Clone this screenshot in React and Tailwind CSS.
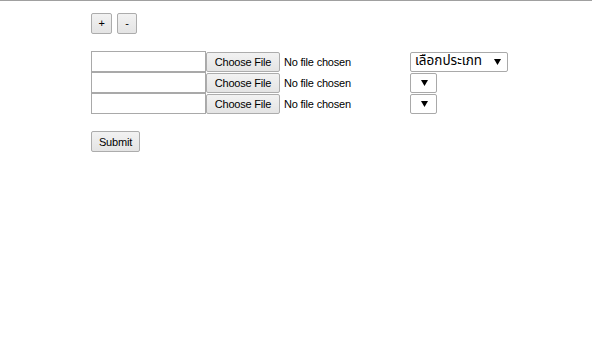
import React from 'react';

const btn =
  "flex items-center justify-center border border-[#acacac] rounded-[2px] bg-gradient-to-b from-[#f2f2f2] to-[#e4e4e4] text-black text-[11px] tracking-[-0.2px] leading-none";

function Arrow() {
  return (
    <svg width="7" height="6" viewBox="0 0 7 6" className="shrink-0">
      <path d="M0 0 H7 L3.5 6 Z" fill="#000" />
    </svg>
  );
}

function FileRow({ withLabel }) {
  return (
    <div className="flex items-center h-[21px]">
      <div className="w-[319px] flex items-center h-full shrink-0">
        <div className="w-[115px] h-[21px] border border-[#a9a9a9] bg-white shrink-0" />
        <div className={`${btn} w-[74px] h-[20px] shrink-0 pt-px`}>Choose File</div>
        <span className="ml-[4px] pt-px text-[11px] tracking-[-0.2px] text-black">No file chosen</span>
      </div>
      {withLabel ? (
        <div className="w-[98px] h-[20px] border border-[#a9a9a9] rounded-[2px] bg-white flex items-center justify-between pl-[4px] pr-[6px]">
          <span className="text-[13.5px] leading-none text-black font-['Tahoma','Noto_Sans_Thai','Noto_Sans',sans-serif]">
            เลือกประเภท
          </span>
          <Arrow />
        </div>
      ) : (
        <div className="w-[27px] h-[20px] border border-[#a9a9a9] rounded-[2px] bg-white flex items-center justify-end pr-[8px]">
          <Arrow />
        </div>
      )}
    </div>
  );
}

export default function App() {
  return (
    <div className="w-[592px] h-[362px] bg-white border-t border-[#a0a0a0] font-['Liberation_Sans',Arial,sans-serif]">
      <div className="pl-[91px] pt-[12px]">
        <div className="flex gap-[5px]">
          <div className={`${btn} w-[21px] h-[21px]`}>+</div>
          <div className={`${btn} w-[20px] h-[21px]`}>-</div>
        </div>
        <div className="mt-[17px] flex flex-col">
          <FileRow withLabel />
          <FileRow />
          <FileRow />
        </div>
        <div className={`${btn} mt-[17px] w-[49px] h-[21px] pt-px`}>Submit</div>
      </div>
    </div>
  );
}
